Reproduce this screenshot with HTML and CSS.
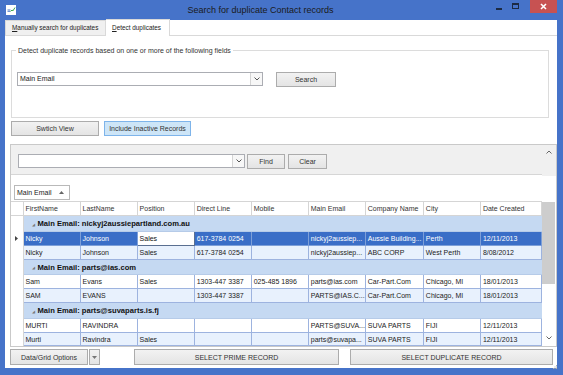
FILE: index.html
```html
<!DOCTYPE html>
<html>
<head>
<meta charset="utf-8">
<link rel="stylesheet" href="styles.css">
</head>
<body>
<div class="window">
  <header class="titlebar">
    <svg class="appicon" width="10" height="10" viewBox="0 0 10 10">
      <rect x="0" y="0" width="10" height="10" fill="#ffffff"/>
      <rect x="1.5" y="4.5" width="3" height="1" fill="#4a78c8"/>
      <rect x="1.5" y="6" width="2.5" height="0.8" fill="#4a78c8"/>
      <polyline points="4.5,6.5 6,5 7,5.8 9,2.5" fill="none" stroke="#3aa64a" stroke-width="1"/>
    </svg>
    <div class="title">Search for duplicate Contact records</div>
    <div class="controls">
      <span class="ctl min"><span class="dash"></span></span>
      <span class="ctl max"><span class="box"></span></span>
      <span class="ctl close">
        <svg width="7" height="7" viewBox="0 0 7 7"><path d="M1 1 L6 6 M6 1 L1 6" stroke="#ffffff" stroke-width="1.6"/></svg>
      </span>
    </div>
  </header>

  <div class="client">
    <div class="tabs">
      <div class="tab"><u>M</u>anually search for duplicates</div>
      <div class="tab active"><u>D</u>etect duplicates</div>
    </div>

    <div class="page">
      <div class="groupbox">
        <span class="legend">Detect duplicate records based on one or more of the following fields</span>
        <div class="grouprow">
          <div class="combo wide">
            <span class="combo-text">Main Email</span>
            <span class="combo-btn"><svg width="6" height="4" viewBox="0 0 6 4"><polyline points="0.5,0.5 3,3 5.5,0.5" fill="none" stroke="#555" stroke-width="1"/></svg></span>
          </div>
          <button class="btn search">Search</button>
        </div>
      </div>

      <div class="btnrow">
        <button class="btn switch">Swtich View</button>
        <button class="btn toggled">Include Inactive Records</button>
      </div>

      <div class="gridpanel">
        <div class="gridmain">
          <div class="findpanel">
            <div class="combo find">
              <span class="combo-text"></span>
              <span class="combo-btn"><svg width="6" height="4" viewBox="0 0 6 4"><polyline points="0.5,0.5 3,3 5.5,0.5" fill="none" stroke="#555" stroke-width="1"/></svg></span>
            </div>
            <button class="btn findbtn">Find</button>
            <button class="btn clearbtn">Clear</button>
          </div>
          <div class="groupby">
            <span class="chip">Main Email <svg width="5" height="3" viewBox="0 0 5 3"><polygon points="0,3 2.5,0 5,3" fill="#666"/></svg></span>
          </div>
          <table class="grid">
            <colgroup>
              <col class="c-ind"><col class="c57"><col class="c57"><col class="c57"><col class="c57"><col class="c57"><col class="c57"><col class="c58"><col class="c57"><col class="c61">
            </colgroup>
            <tr class="hdr">
              <th class="ind"></th><th>FirstName</th><th>LastName</th><th>Position</th><th>Direct Line</th><th>Mobile</th><th>Main Email</th><th>Company Name</th><th>City</th><th>Date Created</th>
            </tr>
            <tr class="grp g16">
              <td class="ind"></td><td colspan="9"><span class="exp">◢</span><b>Main Email: nickyj2aussiepartland.com.au</b></td>
            </tr>
            <tr class="row sel">
              <td class="ind"><svg width="3" height="5" viewBox="0 0 3 5"><polygon points="0,0 3,2.5 0,5" fill="#444"/></svg></td><td>Nicky</td><td>Johnson</td><td class="focus">Sales</td><td>617-3784 0254</td><td></td><td>nickyj2aussiep...</td><td>Aussie Building...</td><td>Perth</td><td>12/11/2013</td>
            </tr>
            <tr class="row alt">
              <td class="ind"></td><td>Nicky</td><td>Johnson</td><td>Sales</td><td>617-3784 0254</td><td></td><td>nickyj2aussiep...</td><td>ABC CORP</td><td>West Perth</td><td>8/08/2012</td>
            </tr>
            <tr class="grp g15">
              <td class="ind"></td><td colspan="9"><span class="exp">◢</span><b>Main Email: parts@ias.com</b></td>
            </tr>
            <tr class="row">
              <td class="ind"></td><td>Sam</td><td>Evans</td><td>Sales</td><td>1303-447 3387</td><td>025-485 1896</td><td>parts@ias.com</td><td>Car-Part.Com</td><td>Chicago, MI</td><td>18/01/2013</td>
            </tr>
            <tr class="row alt">
              <td class="ind"></td><td>SAM</td><td>EVANS</td><td></td><td>1303-447 3387</td><td></td><td>PARTS@IAS.C...</td><td>Car-Part.Com</td><td>Chicago, MI</td><td>18/01/2013</td>
            </tr>
            <tr class="grp g16">
              <td class="ind"></td><td colspan="9"><span class="exp">◢</span><b>Main Email: parts@suvaparts.is.fj</b></td>
            </tr>
            <tr class="row">
              <td class="ind"></td><td>MURTI</td><td>RAVINDRA</td><td></td><td></td><td></td><td>PARTS@SUVA...</td><td>SUVA PARTS</td><td>FIJI</td><td>12/11/2013</td>
            </tr>
            <tr class="row alt last">
              <td class="ind"></td><td>Murti</td><td>Ravindra</td><td>Sales</td><td></td><td></td><td>parts@suvapa...</td><td>SUVA PARTS</td><td>FIJI</td><td>12/11/2013</td>
            </tr>
          </table>
        </div>
        <div class="vscroll">
          <div class="sb-top"><svg width="6" height="4" viewBox="0 0 6 4"><polyline points="0.5,3.5 3,1 5.5,3.5" fill="none" stroke="#666" stroke-width="1"/></svg></div>
          <div class="sb-gap"></div>
          <div class="sb-thumb"></div>
          <div class="sb-rest"></div>
          <div class="sb-bot"><svg width="6" height="4" viewBox="0 0 6 4"><polyline points="0.5,0.5 3,3 5.5,0.5" fill="none" stroke="#666" stroke-width="1"/></svg></div>
        </div>
      </div>

      <div class="bottomrow">
        <div class="split">
          <button class="btn split-main">Data/Grid Options</button>
          <button class="btn split-drop"><svg width="5" height="3" viewBox="0 0 5 3"><polygon points="0,0 5,0 2.5,3" fill="#777"/></svg></button>
        </div>
        <button class="btn prime">SELECT PRIME RECORD</button>
        <button class="btn dup">SELECT DUPLICATE RECORD</button>
        <svg class="grip" width="4" height="4" viewBox="0 0 4 4">
          <rect x="3" y="0" width="1" height="1" fill="#b0b0b0"/>
          <rect x="1.5" y="1.5" width="1" height="1" fill="#b0b0b0"/>
          <rect x="3" y="1.5" width="1" height="1" fill="#b0b0b0"/>
          <rect x="0" y="3" width="1" height="1" fill="#b0b0b0"/>
          <rect x="1.5" y="3" width="1" height="1" fill="#b0b0b0"/>
          <rect x="3" y="3" width="1" height="1" fill="#b0b0b0"/>
        </svg>
      </div>
    </div>
  </div>
</div>
</body>
</html>
```

FILE: styles.css
```css
* { box-sizing: border-box; }
html, body { margin: 0; padding: 0; }
body {
  width: 563px;
  height: 375px;
  overflow: hidden;
  background: #4673c9;
  font-family: "Liberation Sans", Arial, sans-serif;
  font-size: 7px;
  color: #222;
}
.window {
  display: flex;
  flex-direction: column;
  height: 375px;
}
.titlebar {
  height: 20px;
  display: flex;
  align-items: flex-start;
  flex: none;
}
.appicon {
  margin: 5px 0 0 6px;
  flex: none;
}
.title {
  flex: 1;
  text-align: center;
  font-size: 9px;
  line-height: 20px;
  color: #1a1a1a;
  padding-left: 14px;
}
.controls {
  display: flex;
  margin-right: 6px;
  flex: none;
}
.ctl {
  height: 14px;
  display: flex;
  align-items: center;
  justify-content: center;
}
.ctl.min { width: 16px; }
.ctl.max { width: 17px; margin-right: 6px; }
.ctl.min .dash { width: 6px; height: 2px; background: #1c2a44; margin-top: 4px; }
.ctl.max .box { width: 7px; height: 6px; border: 1px solid #1c2a44; border-top-width: 2px; margin-top: -3px; }
.ctl.close {
  width: 27px;
  height: 13px;
  background: #c75252;
}

.client {
  flex: 1;
  margin: 0 6px 7px 5px;
  background: #ffffff;
  display: flex;
  flex-direction: column;
}
.tabs {
  height: 15px;
  display: flex;
  align-items: flex-end;
  flex: none;
}
.tab {
  height: 15px;
  width: 101px;
  border: 1px solid #d9d9d9;
  border-bottom: none;
  background: #f0f0f0;
  color: #222;
  padding-left: 6px;
  line-height: 14px;
  font-size: 6.4px;
  white-space: nowrap;
  overflow: hidden;
}
.tab.active {
  width: 64px;
  height: 17px;
  margin-bottom: -1px;
  background: #ffffff;
  border-left: none;
  padding-left: 6px;
  line-height: 15px;
  position: relative;
}
.tab u { text-decoration: underline; }

.page {
  flex: 1;
  border-top: 1px solid #d9d9d9;
  display: flex;
  flex-direction: column;
  background: #ffffff;
}

.groupbox {
  position: relative;
  margin: 14px 8px 0 6px;
  height: 68px;
  border: 1px solid #dcdcdc;
  padding: 21px 0 0 5px;
}
.legend {
  position: absolute;
  top: -5px;
  left: 4px;
  padding: 0 2px;
  background: #ffffff;
  line-height: 9px;
  color: #333;
}
.grouprow {
  display: flex;
  align-items: flex-start;
}
.combo {
  display: flex;
  height: 14px;
  border: 1px solid #abadb3;
  background: #ffffff;
}
.combo.wide { width: 246px; }
.combo-text {
  flex: 1;
  padding-left: 2px;
  line-height: 12px;
  color: #222;
}
.combo-btn {
  width: 12px;
  border-left: 1px solid #d4d4d4;
  display: flex;
  align-items: center;
  justify-content: center;
  background: #f7f7f7;
}

.btn {
  font-family: "Liberation Sans", Arial, sans-serif;
  font-size: 7px;
  color: #333;
  background: linear-gradient(#f2f2f2, #e4e4e4);
  border: 1px solid #acacac;
  padding: 0;
  margin: 0;
  height: 15px;
  line-height: 13px;
  text-align: center;
  white-space: nowrap;
  flex: none;
}
.btn.search { width: 60px; margin-left: 13px; }

.btnrow {
  display: flex;
  margin: 3px 0 0 6px;
  gap: 5px;
}
.btn.switch { width: 88px; }
.btn.toggled {
  width: 87px;
  background: #cde5f7;
  border-color: #7eb4ea;
}

.gridpanel {
  margin: 8px 0 0 5px;
  height: 203px;
  border: 1px solid #c9c9c9;
  display: flex;
  background: #ffffff;
}
.gridmain {
  width: 531px;
  display: flex;
  flex-direction: column;
}
.findpanel {
  height: 31px;
  background: #f0f0f0;
  border-bottom: 1px solid #d6d6d6;
  display: flex;
  align-items: flex-start;
  padding: 9px 0 0 7px;
}
.combo.find { width: 227px; }
.btn.findbtn { width: 38px; margin-left: 2px; }
.btn.clearbtn { width: 39px; margin-left: 3px; }

.groupby {
  height: 26px;
  padding: 10px 0 0 3px;
}
.chip {
  display: inline-flex;
  align-items: center;
  gap: 7px;
  height: 15px;
  width: 56px;
  border: 1px solid #b9b9b9;
  padding-left: 2px;
  color: #222;
  background: #ffffff;
}

.grid {
  border-collapse: collapse;
  table-layout: fixed;
  width: 531px;
}
.c-ind { width: 12px; }
.c57 { width: 57px; }
.c58 { width: 58px; }
.c61 { width: 61px; }
.grid th, .grid td {
  padding: 0 0 0 2px;
  white-space: nowrap;
  overflow: hidden;
  text-align: left;
  font-weight: normal;
  vertical-align: middle;
}
.grid .hdr th {
  height: 14px;
  border: 1px solid #d5d5d5;
  color: #333;
  background: #ffffff;
}
.grid .hdr th.ind { border-left: none; }
.grid td.ind {
  background: #ffffff;
  border-right: 1px solid #d5d5d5;
  padding: 0 0 0 5px;
}
.grp td { background: #c5d9f2; border-bottom: 1px solid #b6cbe8; }
.grp td.ind { background: #ffffff; border-bottom: none; }
.grp.g16 td { height: 16px; }
.grp.g15 td { height: 15px; }
.grp td b { font-weight: bold; color: #111; font-size: 7.6px; }
.exp {
  display: inline-block;
  font-size: 4px;
  color: #777;
  margin: 0 3px 0 6px;
  vertical-align: middle;
}
.row td {
  height: 14px;
  border: 1px solid #9db3df;
  background: #ffffff;
  color: #222;
}
.row.last td { height: 13px; }
.row td.ind { border: none; border-right: 1px solid #d5d5d5; background: #ffffff; }
.row.alt td { background: #e8f1fd; }
.row.alt td.ind { background: #ffffff; }
.row.sel td {
  background: #3a6ec7;
  color: #ffffff;
  border-color: #7d9fd8;
}
.row.sel td.ind { background: #ffffff; border-color: #d5d5d5; padding-left: 4px; }
.row.sel td.focus {
  background: #ffffff;
  color: #111;
  border: 1px solid #5a6f90;
}

.vscroll {
  width: 14px;
  display: flex;
  flex-direction: column;
  background: #ffffff;
}
.sb-top {
  height: 31px;
  background: #f0f0f0;
  display: flex;
  justify-content: center;
  padding-top: 5px;
}
.sb-gap { height: 26px; }
.sb-thumb { height: 82px; background: #cdcdcd; margin: 0 1px 0 0; }
.sb-rest { flex: 1; }
.sb-bot {
  height: 14px;
  display: flex;
  justify-content: center;
  padding-top: 4px;
}

.bottomrow {
  display: flex;
  margin: 2px 0 0 5px;
  height: 16px;
}
.split { display: flex; flex: none; }
.btn.split-main { width: 78px; height: 16px; }
.btn.split-drop { width: 11px; height: 16px; margin-left: 1px; display: flex; align-items: center; justify-content: center; }
.btn.prime { width: 205px; height: 16px; margin-left: 34px; }
.btn.dup { width: 203px; height: 16px; margin-left: 11px; }
.grip { flex: none; align-self: flex-end; margin: 0 0 -4px 0; }
```
